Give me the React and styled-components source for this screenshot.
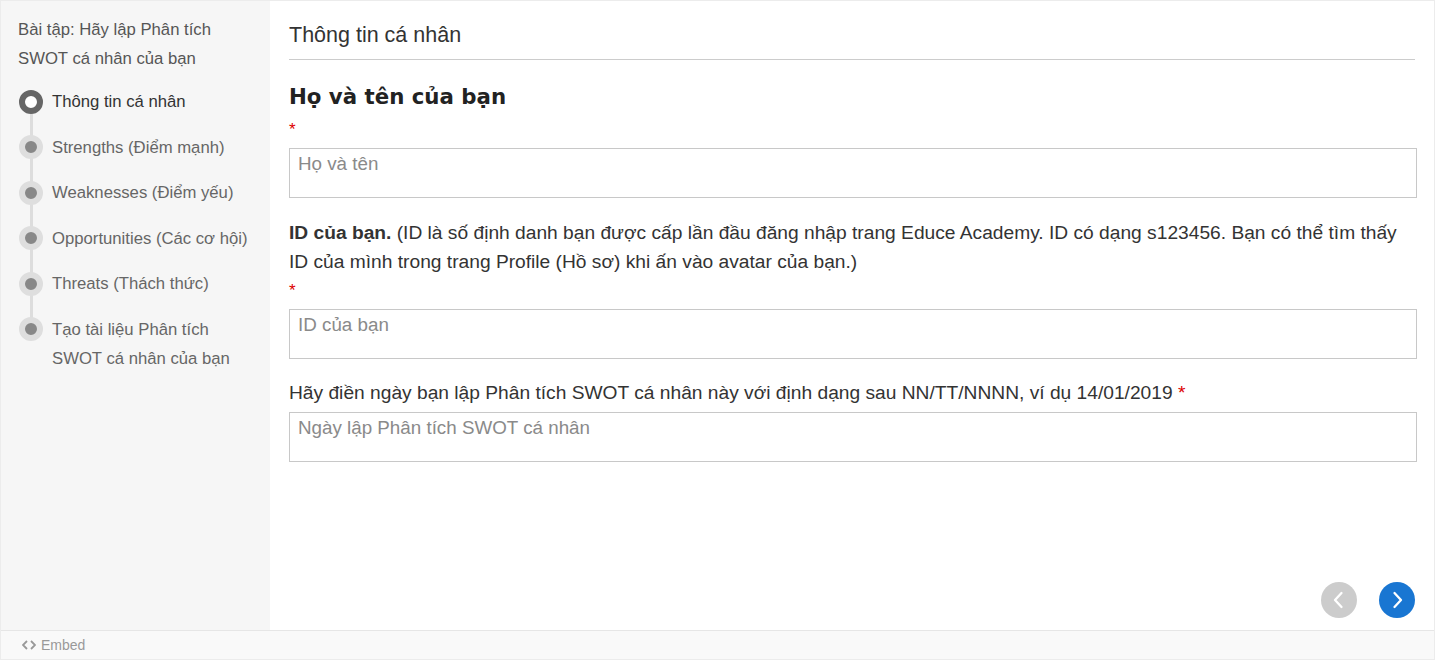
import React from 'react'
import styled, { createGlobalStyle } from 'styled-components';

const GlobalStyle = createGlobalStyle`
    html, body {
        margin: 0;
        padding: 0;
        background: #fff;
    }
    body {
        font-family: "Liberation Sans", Arial, sans-serif;
        color: #333;
    }
    * {
        box-sizing: border-box;
    }
`

const steps = [
    'Thông tin cá nhân',
    'Strengths (Điểm mạnh)',
    'Weaknesses (Điểm yếu)',
    'Opportunities (Các cơ hội)',
    'Threats (Thách thức)',
    'Tạo tài liệu Phân tích SWOT cá nhân của bạn',
]

const App = () => {
    return (
        <>
            <GlobalStyle />
            <Frame>
                <Body>
                    <Sidebar>
                        <SideTitle>Bài tập: Hãy lập Phân tích SWOT cá nhân của bạn</SideTitle>
                        <Steps>
                            {steps.map((s, i) => (
                                <Step key={s} $last={i === steps.length - 1}>
                                    <Marker $active={i === 0} />
                                    <StepLabel $active={i === 0}>{s}</StepLabel>
                                </Step>
                            ))}
                        </Steps>
                    </Sidebar>
                    <Main>
                        <PageTitle>Thông tin cá nhân</PageTitle>

                        <Heading>Họ và tên của bạn</Heading>
                        <StarRow>*</StarRow>
                        <Field placeholder="Họ và tên" />

                        <Label $spaced $tight>
                            <b>ID của bạn.</b> (ID là số định danh bạn được cấp lần đầu đăng nhập trang Educe Academy. ID có dạng s123456. Bạn có thể tìm thấy ID của mình trong trang Profile (Hồ sơ) khi ấn vào avatar của bạn.)
                        </Label>
                        <StarRow>*</StarRow>
                        <Field placeholder="ID của bạn" />

                        <Label $spaced>
                            Hãy điền ngày bạn lập Phân tích SWOT cá nhân này với định dạng sau NN/TT/NNNN, ví dụ 14/01/2019 <Star>*</Star>
                        </Label>
                        <Field placeholder="Ngày lập Phân tích SWOT cá nhân" />

                        <Nav>
                            <NavButton $disabled aria-label="Trước">
                                <svg viewBox="0 0 24 24" width="24" height="24">
                                    <path d="M14.5 5 8 12l6.5 7" fill="none" stroke="#fff" strokeWidth="2.3" strokeLinecap="round" strokeLinejoin="round" />
                                </svg>
                            </NavButton>
                            <NavButton aria-label="Tiếp">
                                <svg viewBox="0 0 24 24" width="24" height="24">
                                    <path d="M9.5 5 16 12l-6.5 7" fill="none" stroke="#fff" strokeWidth="2.3" strokeLinecap="round" strokeLinejoin="round" />
                                </svg>
                            </NavButton>
                        </Nav>
                    </Main>
                </Body>
                <Footer>
                    <svg viewBox="0 0 14 10" width="14" height="10">
                        <path d="M5 1 1 5l4 4M9 1l4 4-4 4" fill="none" stroke="#999" strokeWidth="1.8" />
                    </svg>
                    <span>Embed</span>
                </Footer>
            </Frame>
        </>
    )
}

export default App;

const Frame = styled.div`
    width: 1435px;
    height: 660px;
    border: 1px solid #ececec;
    display: grid;
    grid-template-rows: 1fr 29px;
`

const Body = styled.div`
    display: grid;
    grid-template-columns: 269px 1fr;
    min-height: 0;
`

const Sidebar = styled.aside`
    background: #f6f6f6;
    padding: 14px 13px 0 17px;
`

const SideTitle = styled.div`
    font-size: 16.7px;
    line-height: 29px;
    color: #555;
`

const Steps = styled.ul`
    list-style: none;
    margin: 14px 0 0;
    padding: 0;
    display: flex;
    flex-direction: column;
    gap: 16.6px;
`

const Step = styled.li`
    position: relative;
    display: flex;
    align-items: flex-start;
    gap: 9px;
    padding-left: 1px;

    &::before {
        content: '';
        display: ${p => (p.$last ? 'none' : 'block')};
        position: absolute;
        left: 11.5px;
        top: 14px;
        width: 3px;
        height: calc(100% + 16.6px);
        background: #dddddd;
    }
`

const Marker = styled.span`
    position: relative;
    z-index: 1;
    flex: none;
    width: 24px;
    height: 24px;
    margin-top: 2.5px;
    border-radius: 50%;
    background: ${p => (p.$active ? '#fff' : '#888')};
    border: ${p => (p.$active ? '6px solid #666' : '6px solid #dedede')};
`

const StepLabel = styled.span`
    font-size: 16.7px;
    line-height: 29px;
    color: ${p => (p.$active ? '#333' : '#666')};
`

const Main = styled.main`
    display: flex;
    flex-direction: column;
    padding: 19px 17px 12px 19px;
    min-width: 0;
`

const PageTitle = styled.h1`
    margin: 0 2px 0 0;
    font-size: 21.5px;
    font-weight: normal;
    line-height: 30px;
    color: #333;
    padding-bottom: 9px;
    border-bottom: 1px solid #cccccc;
`

const Heading = styled.h2`
    margin: 22px 0 3px;
    font-family: "DejaVu Sans", Verdana, sans-serif;
    font-size: 21.3px;
    font-weight: bold;
    line-height: 30px;
    color: #222;
`

const StarRow = styled.div`
    color: #d00;
    font-size: 17px;
    line-height: 29px;
    margin-bottom: 4px;
`

const Star = styled.span`
    color: #d00;
`

const Label = styled.div`
    margin-top: ${p => (p.$spaced ? '19.5px' : '0')};
    margin-bottom: ${p => (p.$tight ? '0' : '4.5px')};
    padding-right: 12px;
    font-size: 19.2px;
    line-height: 29px;
    color: #333;

    b {
        font-weight: bold;
    }
`

const Field = styled.textarea`
    display: block;
    width: 100%;
    height: 50px;
    resize: none;
    border: 1px solid #c8c8c8;
    border-radius: 0;
    padding: 4px 8px;
    font-family: "Liberation Sans", Arial, sans-serif;
    font-size: 18.8px;
    line-height: 22px;
    color: #333;
    background: #fff;
    outline: none;

    &::placeholder {
        color: #8a8a8a;
        opacity: 1;
    }
`

const Nav = styled.div`
    margin-top: auto;
    display: flex;
    justify-content: flex-end;
    gap: 22px;
    padding-right: 2px;
`

const NavButton = styled.button`
    width: 36px;
    height: 36px;
    border-radius: 50%;
    border: none;
    padding: 0;
    display: flex;
    align-items: center;
    justify-content: center;
    background: ${p => (p.$disabled ? '#cccccc' : '#1976d2')};
    cursor: ${p => (p.$disabled ? 'default' : 'pointer')};
`

const Footer = styled.footer`
    display: flex;
    align-items: center;
    gap: 5px;
    padding-left: 21px;
    background: #f9f9f9;
    border-top: 1px solid #e6e6e6;
    font-size: 14px;
    color: #999;
`
